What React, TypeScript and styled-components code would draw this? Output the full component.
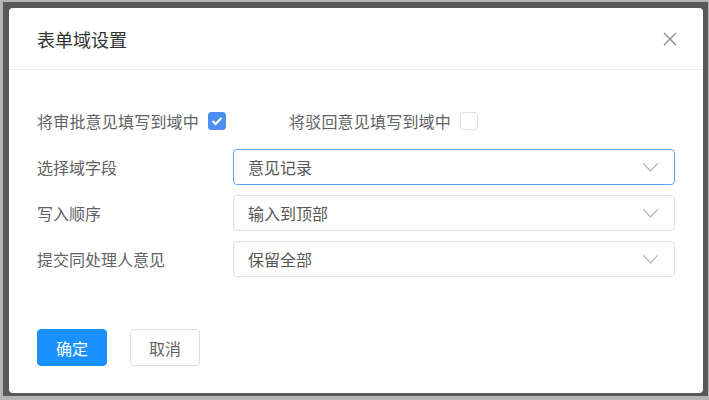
import styled, { createGlobalStyle } from "styled-components";

const GlobalStyle = createGlobalStyle`
  html, body {
    margin: 0;
    padding: 0;
    background: #b5b5b5;
    font-family: "Noto Sans CJK SC", "Noto Sans", sans-serif;
  }
`;

const Frame = styled.div`
  margin: 2px 1px 4px 3px;
  padding: 6px 5px 3px 6px;
  background: #595959;
  height: 394px;
  box-sizing: border-box;
`;

const Dialog = styled.div`
  background: #fff;
  border-radius: 4px;
  height: 100%;
  display: flex;
  flex-direction: column;
`;

const Header = styled.div`
  height: 62px;
  box-sizing: border-box;
  padding: 0 26px 0 28px;
  display: flex;
  align-items: center;
  justify-content: space-between;
  border-bottom: 1px solid #ececec;
`;

const Title = styled.h3`
  margin: 0;
  font-size: 18px;
  font-weight: 400;
  color: #303133;
`;

const Close = styled.button`
  border: 0;
  background: none;
  padding: 0;
  width: 14px;
  height: 14px;
  display: flex;
  cursor: pointer;
`;

const Body = styled.div`
  padding: 33px 28px 0 28px;
  display: flex;
  flex-direction: column;
  gap: 10px;
`;

const Row = styled.div`
  display: flex;
  align-items: center;
  height: 36px;
`;

const CheckGroup = styled.label<{ $w?: number }>`
  display: flex;
  align-items: center;
  gap: 9px;
  width: ${(p) => (p.$w ? `${p.$w}px` : "auto")};
  font-size: 16px;
  letter-spacing: 0.2px;
  color: #606266;
`;

const Box = styled.span<{ $checked?: boolean }>`
  width: 18px;
  height: 18px;
  box-sizing: border-box;
  border-radius: 3px;
  border: 1px solid ${(p) => (p.$checked ? "#4d8ff0" : "#dcdfe6")};
  background: ${(p) => (p.$checked ? "#4d8ff0" : "#fff")};
  display: flex;
  align-items: center;
  justify-content: center;
`;

const Label = styled.span`
  width: 196px;
  flex-shrink: 0;
  font-size: 16px;
  color: #606266;
`;

const Select = styled.div<{ $focused?: boolean }>`
  flex: 1;
  height: 36px;
  box-sizing: border-box;
  border: 1px solid ${(p) => (p.$focused ? "#5aa2ee" : "#dcdfe6")};
  border-radius: 4px;
  padding: 0 15px 0 14px;
  display: flex;
  align-items: center;
  justify-content: space-between;
  font-size: 16px;
  color: #555;
`;

const Footer = styled.div`
  margin-top: 52px;
  padding: 0 28px;
  display: flex;
  gap: 23px;
`;

const Button = styled.button<{ $primary?: boolean }>`
  width: 70px;
  height: 37px;
  box-sizing: border-box;
  border-radius: 4px;
  font-family: inherit;
  font-size: 16px;
  cursor: pointer;
  border: 1px solid ${(p) => (p.$primary ? "#1890ff" : "#dcdfe6")};
  background: ${(p) => (p.$primary ? "#1890ff" : "#fff")};
  color: ${(p) => (p.$primary ? "#fff" : "#606266")};
`;

const Chevron = () => (
  <svg width="17" height="10" viewBox="0 0 17 10">
    <path d="M1 1 L8.5 9 L16 1" fill="none" stroke="#b9b9b9" strokeWidth="1.2" />
  </svg>
);

const Check = () => (
  <svg width="12" height="10" viewBox="0 0 12 10">
    <path d="M1.5 5 L4.6 8 L10.5 2" fill="none" stroke="#fff" strokeWidth="2" />
  </svg>
);

const fields = [
  { label: "选择域字段", value: "意见记录", focused: true },
  { label: "写入顺序", value: "输入到顶部" },
  { label: "提交同处理人意见", value: "保留全部" },
];

export default function App() {
  return (
    <>
      <GlobalStyle />
      <Frame>
        <Dialog>
          <Header>
            <Title>表单域设置</Title>
            <Close aria-label="关闭">
              <svg width="14" height="14" viewBox="0 0 14 14">
                <path d="M1 1 L13 13 M13 1 L1 13" stroke="#8a8a8a" strokeWidth="1.4" />
              </svg>
            </Close>
          </Header>
          <Body>
            <Row>
              <CheckGroup $w={252}>
                将审批意见填写到域中
                <Box $checked>
                  <Check />
                </Box>
              </CheckGroup>
              <CheckGroup>
                将驳回意见填写到域中
                <Box />
              </CheckGroup>
            </Row>
            {fields.map((f) => (
              <Row key={f.label}>
                <Label>{f.label}</Label>
                <Select $focused={f.focused}>
                  {f.value}
                  <Chevron />
                </Select>
              </Row>
            ))}
          </Body>
          <Footer>
            <Button $primary>确定</Button>
            <Button>取消</Button>
          </Footer>
        </Dialog>
      </Frame>
    </>
  );
}
